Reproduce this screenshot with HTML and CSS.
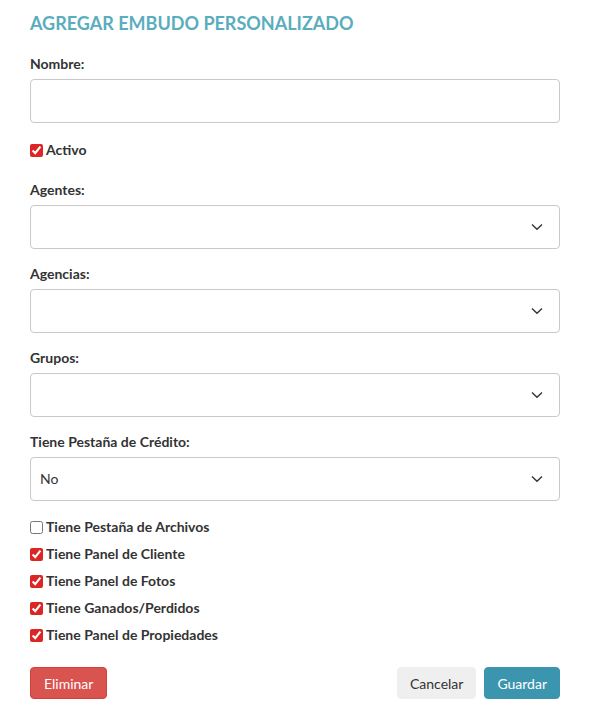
FILE: index.html
```html
<!DOCTYPE html>
<html lang="es">
<head>
<meta charset="utf-8">
<title>Agregar embudo personalizado</title>
<link rel="stylesheet" href="styles.css">
</head>
<body>
<div class="page">
  <h1 class="title">AGREGAR EMBUDO PERSONALIZADO</h1>

  <div class="group group-first">
    <label class="label">Nombre:</label>
    <div class="field"></div>
  </div>

  <label class="check check-activo"><input type="checkbox" checked> Activo</label>

  <div class="group">
    <label class="label">Agentes:</label>
    <div class="field select"><span></span><svg class="chev" width="12" height="8" viewBox="0 0 12 8"><path d="M1 1.5 L6 6.2 L11 1.5" fill="none" stroke="#333" stroke-width="1.4"/></svg></div>
  </div>

  <div class="group">
    <label class="label">Agencias:</label>
    <div class="field select"><span></span><svg class="chev" width="12" height="8" viewBox="0 0 12 8"><path d="M1 1.5 L6 6.2 L11 1.5" fill="none" stroke="#333" stroke-width="1.4"/></svg></div>
  </div>

  <div class="group">
    <label class="label">Grupos:</label>
    <div class="field select"><span></span><svg class="chev" width="12" height="8" viewBox="0 0 12 8"><path d="M1 1.5 L6 6.2 L11 1.5" fill="none" stroke="#333" stroke-width="1.4"/></svg></div>
  </div>

  <div class="group">
    <label class="label">Tiene Pestaña de Crédito:</label>
    <div class="field select"><span class="value">No</span><svg class="chev" width="12" height="8" viewBox="0 0 12 8"><path d="M1 1.5 L6 6.2 L11 1.5" fill="none" stroke="#333" stroke-width="1.4"/></svg></div>
  </div>

  <div class="checks">
    <label class="check"><input type="checkbox"> Tiene Pestaña de Archivos</label>
    <label class="check"><input type="checkbox" checked> Tiene Panel de Cliente</label>
    <label class="check"><input type="checkbox" checked> Tiene Panel de Fotos</label>
    <label class="check"><input type="checkbox" checked> Tiene Ganados/Perdidos</label>
    <label class="check"><input type="checkbox" checked> Tiene Panel de Propiedades</label>
  </div>

  <div class="actions">
    <button class="btn btn-danger">Eliminar</button>
    <div class="right">
      <button class="btn btn-default">Cancelar</button>
      <button class="btn btn-primary">Guardar</button>
    </div>
  </div>
</div>
</body>
</html>
```

FILE: styles.css
```css
* { box-sizing: border-box; }
html, body { margin: 0; padding: 0; background: #fff; }
body {
  font-family: Lato, "Liberation Sans", sans-serif;
  font-size: 14px;
  color: #333;
}
.page {
  padding: 0 30px;
  width: 590px;
}
.title {
  margin: 11px 0 0;
  font-size: 18px;
  line-height: 24px;
  font-weight: 700;
  color: #5aadbe;
  letter-spacing: 0;
}
.group {
  display: flex;
  flex-direction: column;
  margin-top: 15px;
}
.group-first { margin-top: 19px; }
.label {
  display: block;
  font-weight: 700;
  line-height: 20px;
  margin-bottom: 5px;
}
.field {
  height: 44px;
  border: 1px solid #c9c9c9;
  border-radius: 4px;
  background: #fff;
}
.select {
  display: flex;
  align-items: center;
  justify-content: space-between;
  padding: 0 16px 0 9px;
}
.value { line-height: 20px; }
.chev { display: block; }
.check {
  display: flex;
  align-items: center;
  line-height: 20px;
  font-weight: 700;
  height: 20px;
}
.check input {
  width: 13px;
  height: 13px;
  margin: 0 3px 0 0;
  accent-color: #dc2626;
}
.check-activo { margin-top: 17px; margin-bottom: 20px; }
.checks {
  display: flex;
  flex-direction: column;
  gap: 7px;
  margin-top: 16px;
}
.actions {
  display: flex;
  justify-content: space-between;
  margin-top: 22px;
}
.right { display: flex; gap: 8px; }
.btn {
  font-family: Lato, "Liberation Sans", sans-serif;
  font-size: 14px;
  height: 32px;
  padding: 0 12px;
  border-radius: 4px;
  border: 1px solid transparent;
  cursor: pointer;
}
.btn-danger { background: #d9534f; border-color: #d43f3a; color: #fff; padding: 0 13px; }
.btn-default { background: #efefef; border-color: #efefef; color: #333; }
.btn-primary { background: #3c95ae; border-color: #3c95ae; color: #fff; }
```
